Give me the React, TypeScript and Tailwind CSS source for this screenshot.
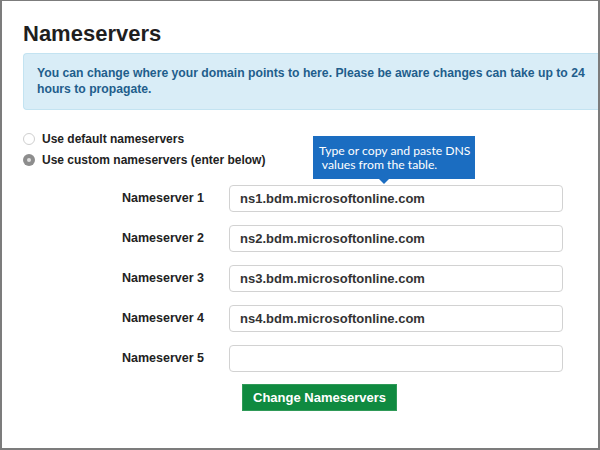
import React from "react";

const servers = [
  "ns1.bdm.microsoftonline.com",
  "ns2.bdm.microsoftonline.com",
  "ns3.bdm.microsoftonline.com",
  "ns4.bdm.microsoftonline.com",
  "",
];

export default function App() {
  return (
    <div
      className="relative w-[600px] h-[450px] overflow-hidden bg-white border-2 border-t border-[#7c7c7c] text-[#222]"
      style={{ fontFamily: '"Liberation Sans", Arial, sans-serif' }}
    >
      <div className="pl-[21px]">
        <h1 className="mt-[20px] text-[22px] leading-[26px] font-bold text-[#1f1f1f]">Nameservers</h1>
        <div className="mt-[6px] h-[57px] rounded-l-[4px] border border-r-0 border-[#c3e3f1] bg-[#d9edf7] pl-[13px] pt-[11px] text-[12.2px] leading-[16px] font-bold text-[#1f5e8c] whitespace-nowrap">
          You can change where your domain points to here. Please be aware changes can take up to 24
          <br />
          hours to propagate.
        </div>

        <div className="mt-[19px] flex flex-col gap-[1px]">
          <div className="flex h-[20px] items-center gap-[7px] text-[12px] font-bold">
            <span className="block h-[12px] w-[12px] rounded-full border border-[#cfcfcf] bg-white" />
            <span>Use default nameservers</span>
          </div>
          <div className="flex h-[20px] items-center gap-[7px] text-[12px] font-bold">
            <span className="flex h-[12px] w-[12px] items-center justify-center rounded-full bg-[#8d8d8d]">
              <span className="block h-[4px] w-[4px] rounded-full bg-[#e0e0e0]" />
            </span>
            <span>Use custom nameservers (enter below)</span>
          </div>
        </div>

        <div className="mt-[15px] flex flex-col gap-[13px]">
          {servers.map((v, i) => (
            <div key={i} className="flex items-center gap-[25px]">
              <div className="w-[181px] text-right text-[12.5px] font-bold">Nameserver {i + 1}</div>
              <div className="flex h-[27px] w-[334px] items-center rounded-[4px] border border-[#d2d2d2] bg-white pl-[10px] text-[13px] font-bold text-[#333]">
                {v}
              </div>
            </div>
          ))}
        </div>

        <button className="ml-[219px] mt-[12px] flex h-[27px] w-[155px] items-center justify-center border border-[#2f9a58] bg-[#0f8a40] text-[13px] font-bold text-white">
          Change Nameservers
        </button>
      </div>

      <div
        className="absolute left-[311px] top-[135px] h-[43px] w-[162px] bg-[#1b6dc1] pl-[6px] pt-[8px] text-[12.2px] leading-[14px] text-white whitespace-nowrap"
        style={{ fontFamily: 'Lato, "Noto Sans", sans-serif' }}
      >
        Type or copy and paste DNS
        <br />
        &nbsp;values from the table.
        <span className="absolute left-[66px] top-[43px] h-0 w-0 border-x-[5px] border-t-[5px] border-x-transparent border-t-[#1b6dc1]" />
      </div>
    </div>
  );
}
